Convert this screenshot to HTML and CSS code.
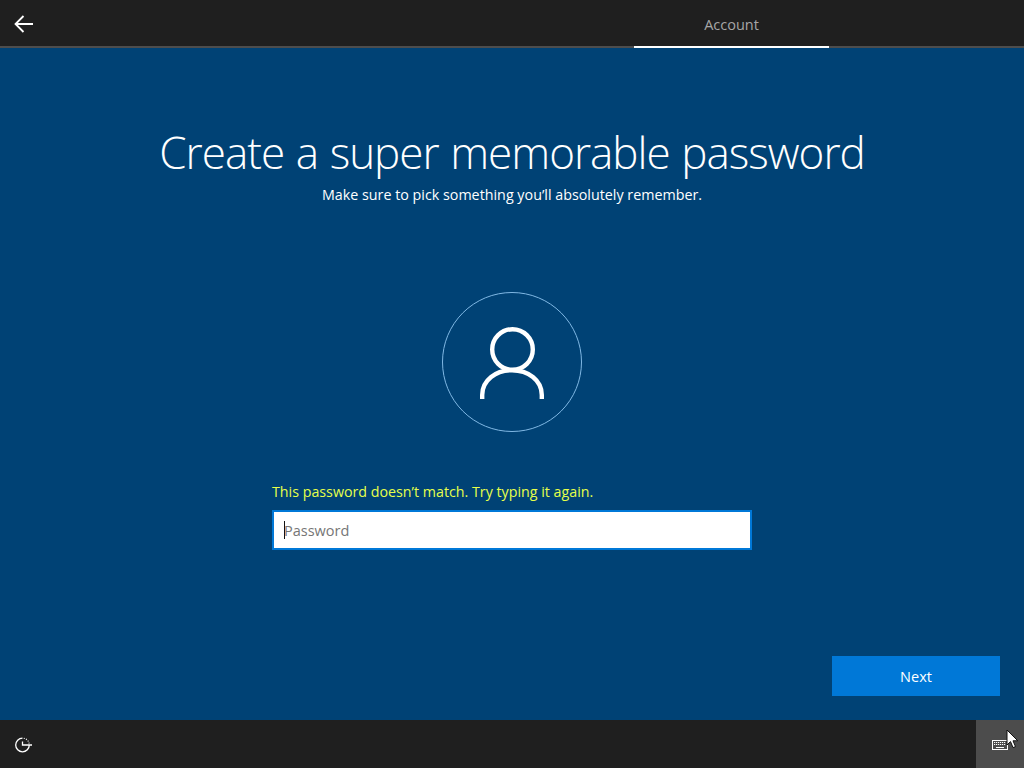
FILE: index.html
```html
<!DOCTYPE html>
<html lang="en">
<head>
<meta charset="utf-8">
<title>Account</title>
<link rel="stylesheet" href="styles.css">
</head>
<body>
<div class="screen">
  <header class="topbar">
    <div class="back">
      <svg class="back-icon" width="20" height="18" viewBox="0 0 20 18"><path d="M9.5 1 1.5 9l8 8M1.5 9H19" fill="none" stroke="#fff" stroke-width="1.8"/></svg>
    </div>
    <div class="tab">Account</div>
  </header>
  <main class="content">
    <h1 class="title">Create a super memorable password</h1>
    <p class="subtitle">Make sure to pick something you’ll absolutely remember.</p>
    <div class="avatar">
      <svg width="64" height="72" viewBox="0 0 64 72"><circle cx="32.500" cy="22.500" r="20.300" fill="none" stroke="#fff" stroke-width="4.400"/><path d="M2.200 72V68C2.200 53 16 43.200 32 43.200S61.800 53 61.800 68V72" fill="none" stroke="#fff" stroke-width="4.400"/></svg>
    </div>
    <div class="form">
      <div class="error">This password doesn’t match. Try typing it again.</div>
      <div class="field"><span class="caret"></span><span class="placeholder">Password</span></div>
    </div>
    <div class="actions"><div class="next">Next</div></div>
  </main>
  <footer class="bottombar">
    <div class="ease">
      <svg width="18" height="18" viewBox="0 0 18 18"><path d="M7.500 2.200A6.800 6.800 0 1 0 14.300 9M7.500 5.500V9H17" fill="none" stroke="#fff" stroke-width="1.300"/><path d="M8.800 2.300A6.800 6.800 0 0 1 14.200 7.500" fill="none" stroke="#fff" stroke-width="1.200" stroke-dasharray="1 1.300"/></svg>
    </div>
    <div class="kbd">
      <svg width="16" height="10" viewBox="0 0 16 10"><rect x=".5" y=".5" width="15" height="9" fill="none" stroke="#fff"/><path d="M2 2.500h12M2 4.500h12" stroke="#fff" stroke-dasharray="1.200 .8"/><path d="M4 7.500h8" stroke="#fff"/></svg>
    </div>
  </footer>
  <svg class="pointer" width="13" height="20" viewBox="0 0 13 20"><path d="M1 1v15l3.500-3.400 2.500 6 2.500-1-2.500-5.800h4.800z" fill="#fff" stroke="#111" stroke-width="1"/></svg>
</div>
</body>
</html>
```
FILE: styles.css
```css
* { box-sizing: border-box; }
html, body { margin: 0; height: 100%; }
body { font-family: "Open Sans", "Noto Sans", sans-serif; overflow: hidden; }
.screen {
  position: relative;
  width: 1024px;
  height: 768px;
  display: flex;
  flex-direction: column;
  background: #004275;
  color: #fff;
}
.topbar {
  height: 48px;
  flex: none;
  display: flex;
  background: #1f1f1f;
  border-bottom: 2px solid #4d4d4d;
}
.back { width: 634px; padding: 15px 0 0 14px; }
.back-icon { display: block; }
.tab {
  width: 195px;
  height: 48px;
  border-bottom: 2px solid #fff;
  text-align: center;
  color: #a6a6a6;
  font-size: 14.500px;
  line-height: 50px;
}
.content {
  flex: 1;
  display: flex;
  flex-direction: column;
  align-items: center;
  padding-top: 74px;
}
.title {
  margin: 0;
  font-size: 44px;
  font-weight: 300;
  line-height: 60px;
  letter-spacing: -1px;
  word-spacing: 1.200px;
  white-space: nowrap;
}
.subtitle {
  margin: 3px 0 0;
  font-size: 14.300px;
  line-height: 20px;
  white-space: nowrap;
}
.avatar {
  width: 140px;
  height: 140px;
  margin-top: 87px;
  padding-top: 2px;
  border: 1px solid #80b8e4;
  border-radius: 50%;
  display: flex;
  align-items: center;
  justify-content: center;
}
.form { width: 480px; margin-top: 50px; }
.error {
  color: #e6ff4a;
  font-size: 14.250px;
  line-height: 20px;
  margin-bottom: 8px;
}
.field {
  height: 40px;
  background: #fff;
  border: 2px solid #0078d7;
  display: flex;
  align-items: center;
  padding-left: 10px;
}
.caret { width: 1px; height: 18px; background: #111; flex: none; }
.placeholder { color: #767676; font-size: 14.500px; margin-left: -1px; }
.actions { width: 100%; display: flex; justify-content: flex-end; padding: 106px 24px 0 0; }
.next {
  width: 168px;
  height: 40px;
  background: #0078d7;
  text-align: center;
  line-height: 41px;
  font-size: 14.500px;
}
.bottombar {
  height: 48px;
  flex: none;
  background: #1f1f1f;
  display: flex;
  justify-content: space-between;
}
.ease { padding: 16px 0 0 15px; }
.ease svg, .kbd svg { display: block; }
.kbd {
  width: 48px;
  background: #4c4c4c;
  padding: 20px 0 0 16px;
}
.pointer { position: absolute; left: 1006px; top: 729px; }
```
